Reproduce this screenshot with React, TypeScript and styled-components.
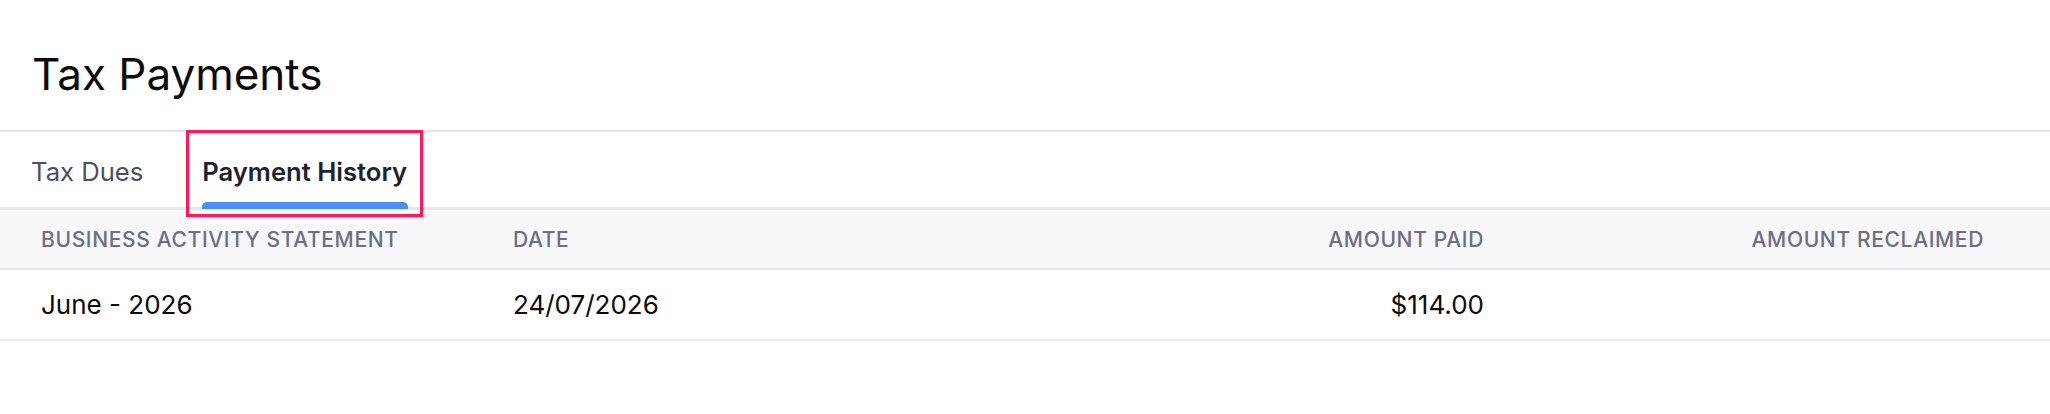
import React from 'react';
import styled, { createGlobalStyle } from 'styled-components';

const GlobalStyle = createGlobalStyle`
  html, body {
    margin: 0;
    padding: 0;
    background: #ffffff;
    font-family: Inter, "Noto Sans", sans-serif;
  }
`;

type Payment = {
  statement: string;
  date: string;
  paid: string;
  reclaimed: string;
};

const payments: Payment[] = [
  { statement: 'June - 2026', date: '24/07/2026', paid: '$114.00', reclaimed: '' },
];

const Page = styled.div`
  width: 100%;
`;

const Header = styled.header`
  padding: 52px 32px 34px;
  border-bottom: 2px solid #e4e4e8;
`;

const Title = styled.h1`
  margin: 0;
  font-size: 44px;
  line-height: 1;
  font-weight: 400;
  color: #0b0b0d;
`;

const TabList = styled.nav`
  display: flex;
  gap: 59px;
  height: 75px;
  padding-left: 31px;
  border-bottom: 3px solid #e6e6eb;
`;

const Tab = styled.div<{ $active?: boolean }>`
  position: relative;
  padding-top: 27px;
  font-size: 25.6px;
  line-height: 1;
  font-weight: ${p => (p.$active ? 600 : 400)};
  color: ${p => (p.$active ? '#1e2230' : '#4b5060')};
  white-space: nowrap;

  ${p =>
    p.$active &&
    `
    &::after {
      content: '';
      position: absolute;
      left: 0;
      right: -1px;
      bottom: -2px;
      height: 7px;
      border-radius: 5px 5px 0 0;
      background: #4a8ff6;
    }
  `}
`;

const Highlight = styled.span`
  position: absolute;
  top: -2px;
  left: -16px;
  right: -16px;
  bottom: -10px;
  border: 3px solid #fe1a5a;
  z-index: 2;
  pointer-events: none;
`;

const Row = styled.div<{ $head?: boolean }>`
  display: grid;
  grid-template-columns: 472px 500px 471px 500px;
  align-items: center;
  padding: 0 66px 0 41px;
  height: ${p => (p.$head ? '58px' : '69px')};
  background: ${p => (p.$head ? '#f8f8fa' : '#ffffff')};
  border-bottom: 2px solid #e8e8ee;
`;

const Cell = styled.div<{ $right?: boolean; $head?: boolean }>`
  text-align: ${p => (p.$right ? 'right' : 'left')};
  font-size: ${p => (p.$head ? '21px' : '26px')};
  font-weight: ${p => (p.$head ? 500 : 400)};
  letter-spacing: ${p => (p.$head ? '0.65px' : 'normal')};
  text-transform: ${p => (p.$head ? 'uppercase' : 'none')};
  color: ${p => (p.$head ? '#6b6e85' : '#0b0b0d')};
  line-height: 1;
  white-space: nowrap;
`;

export default function App() {
  return (
    <Page>
      <GlobalStyle />
      <Header>
        <Title>Tax Payments</Title>
      </Header>
      <TabList>
        <Tab>Tax Dues</Tab>
        <Tab $active>
          Payment History
          <Highlight />
        </Tab>
      </TabList>
      <Row $head>
        <Cell $head>Business Activity Statement</Cell>
        <Cell $head>Date</Cell>
        <Cell $head $right>Amount Paid</Cell>
        <Cell $head $right>Amount Reclaimed</Cell>
      </Row>
      {payments.map(p => (
        <Row key={p.statement}>
          <Cell>{p.statement}</Cell>
          <Cell>{p.date}</Cell>
          <Cell $right>{p.paid}</Cell>
          <Cell $right>{p.reclaimed}</Cell>
        </Row>
      ))}
    </Page>
  );
}
